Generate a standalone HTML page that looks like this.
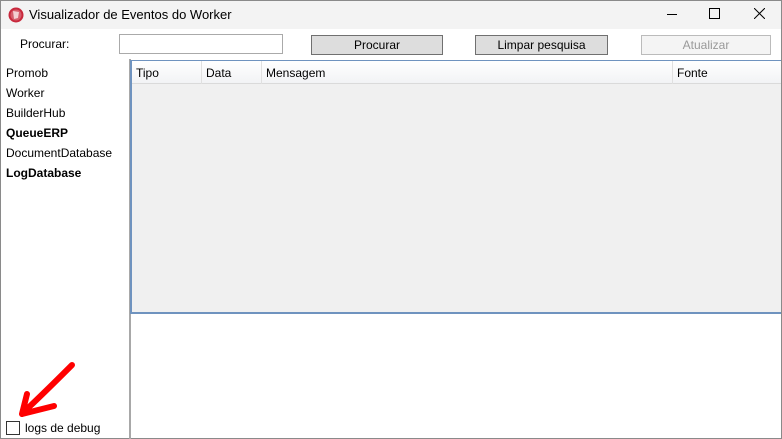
<!DOCTYPE html>
<html><head><style>
body{margin:0;width:782px;height:439px;overflow:hidden;font-family:"Liberation Sans",sans-serif;font-size:12px;color:#000;background:#fff}
.win{position:absolute;left:0;top:0;width:780px;height:437px;border:1px solid #8a8a8a;background:#fff}
.title{position:absolute;left:0;top:0;width:780px;height:28px;background:#f3f3f3}
.abs{position:absolute;white-space:nowrap}
.btn{position:absolute;height:18px;border:1px solid #707070;background:#ddd;text-align:center;line-height:18px;font-size:12px}
</style></head><body>
<div class="win">
<div class="title"></div>
<svg class="abs" style="left:7px;top:6px" width="16" height="16"><circle cx="8" cy="8" r="7.5" fill="#c8283c"/><circle cx="8" cy="8" r="5.5" fill="#fff" opacity=".25"/><path d="M5 4 L11 5 L10 11 L6 12 Z" fill="#fff" opacity=".7"/></svg>
<div class="abs" style="left:28px;top:6px;font-size:13px">Visualizador de Eventos do Worker</div>
<div class="abs" style="left:666px;top:13px;width:10px;height:1px;background:#000"></div>
<div class="abs" style="left:708px;top:7px;width:9px;height:9px;border:1px solid #000"></div>
<svg class="abs" style="left:753px;top:7px" width="11" height="11"><path d="M0 0L11 11M11 0L0 11" stroke="#000" stroke-width="1"/></svg>
<div class="abs" style="left:19px;top:36px">Procurar:</div>
<div class="abs" style="left:118px;top:33px;width:162px;height:18px;border:1px solid #aaa"></div>
<div class="btn" style="left:310px;top:34px;width:130px">Procurar</div>
<div class="btn" style="left:474px;top:34px;width:131px">Limpar pesquisa</div>
<div class="btn" style="left:640px;top:34px;width:128px;border-color:#bbb;background:#f4f4f4;color:#999">Atualizar</div>
<div class="abs" style="left:128px;top:58px;width:2px;height:380px;background:#a8a8a8"></div>
<div class="abs" style="left:5px;top:62px;line-height:20px">Promob<br>Worker<br>BuilderHub<br><b>QueueERP</b><br>DocumentDatabase<br><b>LogDatabase</b></div>
<div class="abs" style="left:129px;top:59px;width:649px;height:251px;border:1px solid #6f93bf;border-width:1px 0 2px 2px;background:#f0f0f0"></div>
<div class="abs" style="left:131px;top:60px;width:649px;height:22px;background:linear-gradient(#fff,#f2f3f5);border-bottom:1px solid #dadada"></div>
<div class="abs" style="left:200px;top:60px;width:1px;height:23px;background:#e0e0e0"></div>
<div class="abs" style="left:260px;top:60px;width:1px;height:23px;background:#e0e0e0"></div>
<div class="abs" style="left:671px;top:60px;width:1px;height:23px;background:#e0e0e0"></div>
<div class="abs" style="left:135px;top:65px">Tipo</div>
<div class="abs" style="left:205px;top:65px">Data</div>
<div class="abs" style="left:265px;top:65px">Mensagem</div>
<div class="abs" style="left:676px;top:65px">Fonte</div>
<svg class="abs" style="left:10px;top:355px" width="70" height="65"><path d="M61 9 C48 22 34 36 17 52 M11 58 L16 38 M11 58 L43 50" stroke="#f00" stroke-width="6" stroke-linecap="round" stroke-linejoin="round" fill="none"/></svg>
<div class="abs" style="left:5px;top:420px;width:12px;height:12px;border:1px solid #333"></div>
<div class="abs" style="left:24px;top:420px">logs de debug</div>
</div>
</body></html>
